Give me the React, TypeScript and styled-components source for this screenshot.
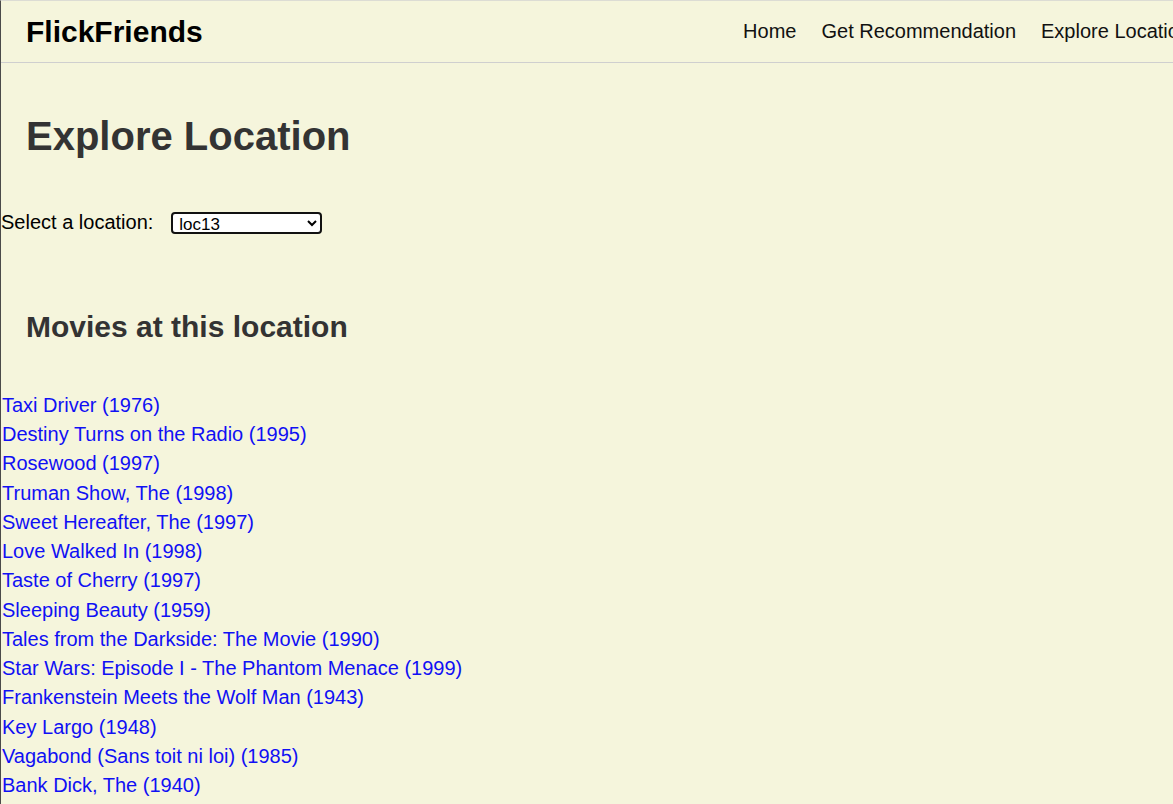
import React from "react";
import styled, { createGlobalStyle } from "styled-components";

const GlobalStyle = createGlobalStyle`
  html, body {
    margin: 0;
    padding: 0;
    background: #f5f5dc;
    overflow: hidden;
  }
  body {
    font-family: "Liberation Sans", Arial, sans-serif;
    color: #000;
  }
`;

const Page = styled.div`
  min-height: 803px;
  border-top: 1px solid #dcdcd4;
  border-left: 1px solid #4a4a4a;
  background: #f5f5dc;
`;

const Nav = styled.nav`
  display: flex;
  align-items: center;
  justify-content: space-between;
  box-sizing: content-box;
  width: 100%;
  height: 61px;
  padding: 0 25px;
  border-bottom: 1px solid #cfcfcf;
`;

const Logo = styled.div`
  font-size: 30px;
  font-weight: bold;
  color: #000;
`;

const NavList = styled.ul`
  display: flex;
  gap: 25px;
  margin: 0;
  padding: 0 8px 0 0;
  list-style: none;
`;

const NavLink = styled.a`
  font-size: 20px;
  color: #111;
  text-decoration: none;
  white-space: nowrap;
`;

const Title = styled.h1`
  margin: 51px 0 0 25px;
  font-size: 40px;
  font-weight: bold;
  color: #333;
`;

const SelectRow = styled.div`
  display: flex;
  align-items: center;
  gap: 18px;
  height: 23px;
  margin-top: 52px;
`;

const Label = styled.label`
  font-size: 20px;
  color: #000;
`;

const Select = styled.select`
  box-sizing: border-box;
  width: 151px;
  height: 22px;
  padding: 0 0 0 2px;
  border: 2px solid #111;
  border-radius: 4px;
  background: #fff;
  font-family: "Liberation Sans", Arial, sans-serif;
  font-size: 17px;
  color: #000;
`;

const SubTitle = styled.h2`
  margin: 76px 0 0 25px;
  font-size: 30px;
  font-weight: bold;
  color: #333;
`;

const MovieList = styled.ul`
  margin: 47px 0 0 0;
  padding: 0 0 0 1px;
  list-style: none;
`;

const MovieItem = styled.li`
  font-size: 20px;
  line-height: 29.23px;
`;

const MovieLink = styled.a`
  color: #1010f4;
  text-decoration: none;
`;

const movies = [
  "Taxi Driver (1976)",
  "Destiny Turns on the Radio (1995)",
  "Rosewood (1997)",
  "Truman Show, The (1998)",
  "Sweet Hereafter, The (1997)",
  "Love Walked In (1998)",
  "Taste of Cherry (1997)",
  "Sleeping Beauty (1959)",
  "Tales from the Darkside: The Movie (1990)",
  "Star Wars: Episode I - The Phantom Menace (1999)",
  "Frankenstein Meets the Wolf Man (1943)",
  "Key Largo (1948)",
  "Vagabond (Sans toit ni loi) (1985)",
  "Bank Dick, The (1940)",
];

const locations = Array.from({ length: 20 }, (_, i) => `loc${i + 1}`);

export default function App() {
  return (
    <>
      <GlobalStyle />
      <Page>
        <Nav>
          <Logo>FlickFriends</Logo>
          <NavList>
            <li>
              <NavLink href="#">Home</NavLink>
            </li>
            <li>
              <NavLink href="#">Get Recommendation</NavLink>
            </li>
            <li>
              <NavLink href="#">Explore Location</NavLink>
            </li>
          </NavList>
        </Nav>
        <Title>Explore Location</Title>
        <SelectRow>
          <Label htmlFor="loc">Select a location:</Label>
          <Select id="loc" defaultValue="loc13">
            {locations.map((l) => (
              <option key={l} value={l}>
                {l}
              </option>
            ))}
          </Select>
        </SelectRow>
        <SubTitle>Movies at this location</SubTitle>
        <MovieList>
          {movies.map((m) => (
            <MovieItem key={m}>
              <MovieLink href="#">{m}</MovieLink>
            </MovieItem>
          ))}
        </MovieList>
      </Page>
    </>
  );
}
